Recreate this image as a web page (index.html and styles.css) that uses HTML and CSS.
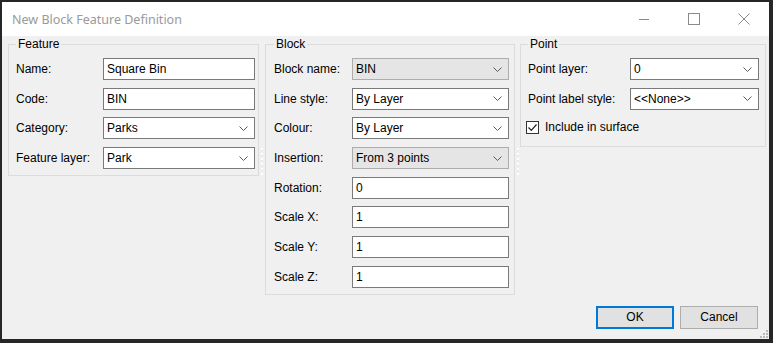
FILE: index.html
```html
<!DOCTYPE html>
<html lang="en">
<head>
    <meta charset="UTF-8">
    <title>New Block Feature Definition</title>
    <link rel="stylesheet" href="styles.css">
</head>
<body>
    <div class="window">
        <div class="titlebar">
            <span class="title">New Block Feature Definition</span>
            <div class="controls">
                <span class="ctl"><svg width="12" height="12" viewBox="0 0 12 12"><path d="M1 6.5h10" stroke="#8a8a8a" fill="none"/></svg></span>
                <span class="ctl"><svg width="12" height="12" viewBox="0 0 12 12"><rect x="0.5" y="0.5" width="11" height="11" stroke="#8a8a8a" fill="none"/></svg></span>
                <span class="ctl"><svg width="12" height="12" viewBox="0 0 12 12"><path d="M0.5 0.5l11 11M11.5 0.5l-11 11" stroke="#8a8a8a" fill="none"/></svg></span>
            </div>
        </div>

        <div class="client">
            <div class="groups">
                <fieldset class="group feature">
                    <legend>Feature</legend>
                    <div class="row"><span class="lbl">Name:</span><div class="field">Square Bin</div></div>
                    <div class="row"><span class="lbl">Code:</span><div class="field">BIN</div></div>
                    <div class="row"><span class="lbl">Category:</span><div class="field combo"><span>Parks</span><svg class="chev" width="9" height="5" viewBox="0 0 9 5"><path d="M0.5 0.5l4 4 4-4" stroke="#5a5a5a" fill="none"/></svg></div></div>
                    <div class="row"><span class="lbl">Feature layer:</span><div class="field combo"><span>Park</span><svg class="chev" width="9" height="5" viewBox="0 0 9 5"><path d="M0.5 0.5l4 4 4-4" stroke="#5a5a5a" fill="none"/></svg></div></div>
                </fieldset>

                <div class="splitter wide"><div class="dots"></div></div>

                <fieldset class="group block">
                    <legend>Block</legend>
                    <div class="row"><span class="lbl">Block name:</span><div class="field combo disabled"><span>BIN</span><svg class="chev" width="9" height="5" viewBox="0 0 9 5"><path d="M0.5 0.5l4 4 4-4" stroke="#5a5a5a" fill="none"/></svg></div></div>
                    <div class="row"><span class="lbl">Line style:</span><div class="field combo"><span>By Layer</span><svg class="chev" width="9" height="5" viewBox="0 0 9 5"><path d="M0.5 0.5l4 4 4-4" stroke="#5a5a5a" fill="none"/></svg></div></div>
                    <div class="row"><span class="lbl">Colour:</span><div class="field combo"><span>By Layer</span><svg class="chev" width="9" height="5" viewBox="0 0 9 5"><path d="M0.5 0.5l4 4 4-4" stroke="#5a5a5a" fill="none"/></svg></div></div>
                    <div class="row"><span class="lbl">Insertion:</span><div class="field combo disabled"><span>From 3 points</span><svg class="chev" width="9" height="5" viewBox="0 0 9 5"><path d="M0.5 0.5l4 4 4-4" stroke="#5a5a5a" fill="none"/></svg></div></div>
                    <div class="row"><span class="lbl">Rotation:</span><div class="field">0</div></div>
                    <div class="row"><span class="lbl">Scale X:</span><div class="field">1</div></div>
                    <div class="row"><span class="lbl">Scale Y:</span><div class="field">1</div></div>
                    <div class="row"><span class="lbl">Scale Z:</span><div class="field">1</div></div>
                </fieldset>

                <div class="splitter"><div class="dots"></div></div>

                <fieldset class="group point">
                    <legend>Point</legend>
                    <div class="row"><span class="lbl">Point layer:</span><div class="field combo"><span>0</span><svg class="chev" width="9" height="5" viewBox="0 0 9 5"><path d="M0.5 0.5l4 4 4-4" stroke="#5a5a5a" fill="none"/></svg></div></div>
                    <div class="row"><span class="lbl">Point label style:</span><div class="field combo"><span>&lt;&lt;None&gt;&gt;</span><svg class="chev" width="9" height="5" viewBox="0 0 9 5"><path d="M0.5 0.5l4 4 4-4" stroke="#5a5a5a" fill="none"/></svg></div></div>
                    <div class="check-row">
                        <svg class="checkbox" width="13" height="13" viewBox="0 0 13 13"><rect x="0.5" y="0.5" width="12" height="12" fill="#fff" stroke="#333"/><path d="M2.5 6.5l2.8 2.8 5.2-5.8" stroke="#222" stroke-width="1.2" fill="none"/></svg>
                        <span>Include in surface</span>
                    </div>
                </fieldset>
            </div>

            <div class="buttons">
                <div class="btn default">OK</div>
                <div class="btn">Cancel</div>
            </div>

            <svg class="grip" width="10" height="10" viewBox="0 0 10 10">
                <rect x="7" y="1" width="2" height="2" fill="#b8b8b8"/>
                <rect x="4" y="4" width="2" height="2" fill="#b8b8b8"/>
                <rect x="7" y="4" width="2" height="2" fill="#b8b8b8"/>
                <rect x="1" y="7" width="2" height="2" fill="#b8b8b8"/>
                <rect x="4" y="7" width="2" height="2" fill="#b8b8b8"/>
                <rect x="7" y="7" width="2" height="2" fill="#b8b8b8"/>
            </svg>
        </div>
    </div>
</body>
</html>
```

FILE: styles.css
```css
body {
    margin: 0;
    font-family: "Liberation Sans", Arial, sans-serif;
    font-size: 12px;
    color: #000;
    background-color: #fff;
}
.window {
    width: 773px;
    height: 343px;
    box-sizing: border-box;
    border-style: solid;
    border-color: #262626;
    border-width: 2px 4px 4px 2px;
    display: flex;
    flex-direction: column;
}
.titlebar {
    height: 34px;
    background-color: #fff;
    display: flex;
    align-items: center;
    justify-content: space-between;
}
.title {
    font-family: "Noto Sans", sans-serif;
    font-size: 12.5px;
    color: #9a9a9a;
    padding-left: 10px;
}
.controls {
    display: flex;
    height: 100%;
}
.ctl {
    width: 50px;
    display: flex;
    align-items: center;
    justify-content: center;
}
.client {
    position: relative;
    flex: 1;
    background-color: #f0f0f0;
    display: flex;
    flex-direction: column;
    padding: 1px 3px 10px 6px;
}
.groups {
    display: flex;
    align-items: flex-start;
}
.group {
    flex: none;
    margin: 0;
    min-width: 0;
    border: 1px solid #dcdcdc;
    padding: 7px 0 6px 7px;
    display: flex;
    flex-direction: column;
    gap: 7.7px;
    box-sizing: border-box;
}
.group legend {
    padding: 0 2px;
    line-height: 14px;
}
.feature {
    width: 251px;
    padding-right: 3px;
}
.block {
    width: 250px;
    padding-left: 8px;
    padding-right: 5px;
}
.point {
    width: 246px;
    padding-right: 6px;
    padding-bottom: 9px;
}
.row {
    display: flex;
    align-items: center;
    height: 22px;
}
.lbl {
    flex: none;
}
.feature .lbl { width: 87px; }
.block .lbl { width: 78px; }
.point .lbl { width: 102px; }
.field {
    flex: 1;
    height: 22px;
    box-sizing: border-box;
    border: 1px solid #7a7a7a;
    background-color: #fff;
    padding: 0 3px;
    line-height: 20px;
    white-space: nowrap;
}
.combo {
    display: flex;
    align-items: center;
    justify-content: space-between;
    padding-right: 6px;
}
.combo.disabled {
    background-color: #e5e5e5;
    border-color: #adadad;
}
.chev {
    display: block;
}
.check-row {
    display: flex;
    align-items: center;
    gap: 6px;
    height: 20px;
    margin-left: -2px;
}
.checkbox {
    display: block;
}
.splitter {
    flex: none;
    width: 5px;
    align-self: stretch;
    display: flex;
    justify-content: center;
}
.splitter.wide {
    width: 6px;
}
.dots {
    width: 2px;
    height: 27px;
    margin-top: 111px;
    background: repeating-linear-gradient(to bottom, #fff 0, #fff 2px, #e4e4e4 2px, #e4e4e4 3px, transparent 3px, transparent 5px);
}
.buttons {
    margin-top: auto;
    padding-right: 8px;
    display: flex;
    justify-content: flex-end;
    gap: 6px;
}
.btn {
    width: 78px;
    height: 23px;
    box-sizing: border-box;
    border: 1px solid #adadad;
    background-color: #e1e1e1;
    text-align: center;
    line-height: 21px;
}
.btn.default {
    border: 2px solid #0078d7;
    line-height: 19px;
}
.grip {
    position: absolute;
    right: 0;
    bottom: 0;
}
```
